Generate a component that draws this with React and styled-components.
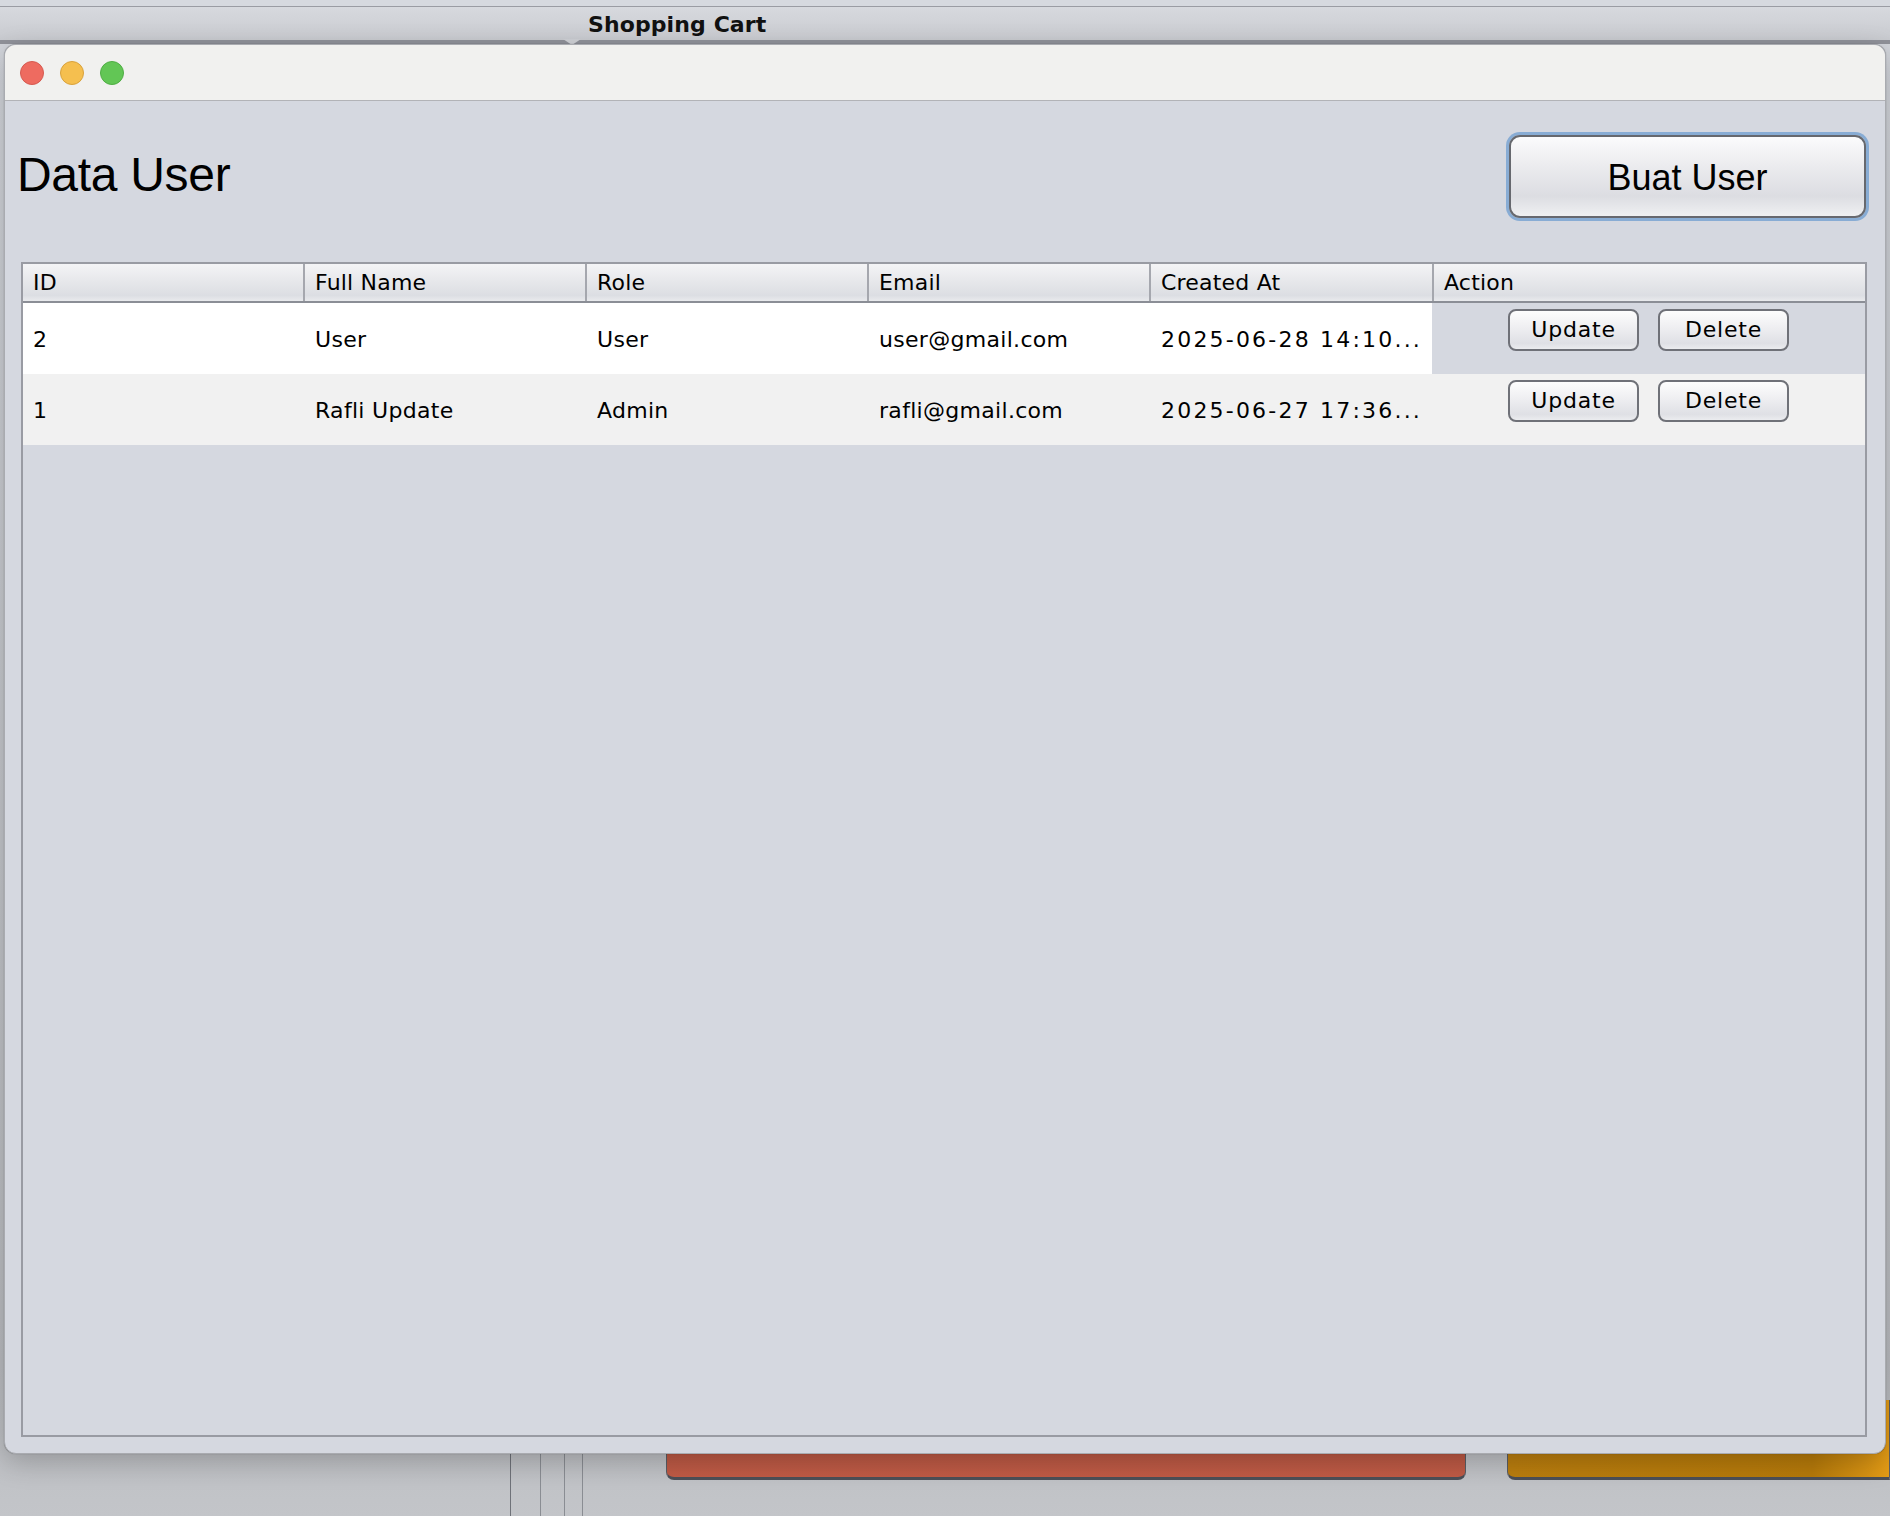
import React from "react";
import styled, { createGlobalStyle } from "styled-components";

const Global = createGlobalStyle`
  html, body { margin: 0; padding: 0; }
  body {
    width: 1890px;
    height: 1516px;
    overflow: hidden;
    font-family: "DejaVu Sans", "Liberation Sans", sans-serif;
  }
`;

const Desktop = styled.div`
  position: relative;
  width: 1890px;
  height: 1516px;
  overflow: hidden;
  background: linear-gradient(180deg, #d3d6dc 0%, #b9bbbf 90%, #c3c5c9 100%);
`;

/* ---------- background application ---------- */
const BackApp = styled.div`
  display: flex;
  flex-direction: column;
  height: 100%;
`;

const BackTop = styled.div`
  height: 6px;
  background: #d6d9df;
  border-bottom: 1px solid #9a9ca3;
`;

const BackTitleBar = styled.div`
  position: relative;
  height: 32px;
  padding-left: 588px;
  padding-top: 1px;
  display: flex;
  align-items: center;
  background: linear-gradient(180deg, #d7d9de, #c9cbd0);
  border-bottom: 4px solid #90929a;
  font-family: "DejaVu Sans", sans-serif;
  font-weight: bold;
  font-size: 22px;
  color: #111;
  letter-spacing: 0.1px;
  &::after {
    content: "";
    position: absolute;
    left: 563px;
    bottom: -5px;
    width: 0;
    height: 0;
    border-left: 9px solid transparent;
    border-right: 9px solid transparent;
    border-top: 6px solid #cfd1d6;
  }
`;

const BackBody = styled.div`
  flex: 1;
  display: flex;
`;

const Pane = styled.div`
  width: ${(p) => p.$w}px;
  flex-shrink: 0;
  border-right: 1px solid ${(p) => p.$line || "#7c7f86"};
`;

const MainPane = styled.div`
  flex: 1;
  display: flex;
  flex-direction: column;
  justify-content: flex-end;
  padding: 0 0 36px 83px;
`;

const BackButtons = styled.div`
  display: flex;
  gap: 41px;
  height: 80px;
`;

const BackButton = styled.div`
  width: ${(p) => (p.$w ? `${p.$w}px` : "auto")};
  flex: ${(p) => (p.$w ? "0 0 auto" : "1")};
  border-radius: ${(p) => (p.$w ? "0 0 8px 8px" : "0 0 0 8px")};
  border: 1px solid #5a5d64;
  border-top: none;
  border-bottom: 3px solid #4c4f57;
  background: ${(p) => p.$bg};
`;

/* ---------- foreground window ---------- */
const Window = styled.div`
  position: absolute;
  left: 4px;
  top: 44px;
  width: 1882px;
  height: 1410px;
  box-sizing: border-box;
  display: flex;
  flex-direction: column;
  border-radius: 12px;
  border: 1px solid #a9abb0;
  background: #d5d8e0;
  overflow: hidden;
  box-shadow: 0 8px 28px rgba(0, 0, 0, 0.22), 0 0 1px rgba(0,0,0,0.4);
`;

const TitleBar = styled.div`
  height: 55px;
  flex-shrink: 0;
  display: flex;
  align-items: center;
  gap: 16px;
  padding-left: 15px;
  background: #f1f1ef;
  border-bottom: 1px solid #b2b3b7;
`;

const Light = styled.span`
  width: 24px;
  height: 24px;
  border-radius: 50%;
  box-sizing: border-box;
  background: ${(p) => p.$bg};
  border: 1px solid ${(p) => p.$bd};
`;

const Content = styled.div`
  flex: 1;
  display: flex;
  flex-direction: column;
  padding: 33px 18px 16px 12px;
  min-height: 0;
`;

const HeaderRow = styled.div`
  display: flex;
  align-items: center;
  justify-content: space-between;
  height: 84px;
  margin-bottom: 44px;
`;

const Heading = styled.h1`
  margin: 0 0 4px 0;
  font-family: "Liberation Sans", Arial, sans-serif;
  font-weight: normal;
  font-size: 48px;
  letter-spacing: -0.3px;
  color: #000;
`;

const PrimaryButton = styled.button`
  width: 357px;
  height: 83px;
  margin-right: 1px;
  box-sizing: border-box;
  border-radius: 11px;
  border: 2px solid #66686e;
  box-shadow: 0 0 0 3px #88acd4;
  background: linear-gradient(180deg, #fbfbfc 0%, #ececef 35%, #dcdde2 75%, #eff0f2 100%);
  font-family: "Liberation Sans", Arial, sans-serif;
  font-size: 36px;
  color: #000;
  padding: 4px 0 0;
`;

const Table = styled.div`
  flex: 1;
  margin-left: 4px;
  display: flex;
  flex-direction: column;
  border: 2px solid #999ba3;
  min-height: 0;
`;

const COLS = "280px 282px 282px 282px 283px 1fr";

const HeadRow = styled.div`
  display: grid;
  grid-template-columns: ${COLS};
  height: 37px;
  border-bottom: 2px solid #8b8e96;
  background: linear-gradient(180deg, #f4f4f6 0%, #e7e8eb 45%, #dcdee3 85%, #e9eaed 100%);
`;

const HeadCell = styled.div`
  display: flex;
  align-items: center;
  padding-left: 10px;
  border-left: ${(p) => (p.$first ? "none" : "2px solid #a5a7ae")};
  font-size: 22px;
  letter-spacing: 0.2px;
  color: #000;
  white-space: nowrap;
`;

const Row = styled.div`
  display: grid;
  grid-template-columns: ${COLS};
  height: 71px;
  background: ${(p) => (p.$alt ? "#f1f1f1" : "transparent")};
`;

const Cell = styled.div`
  display: flex;
  align-items: center;
  padding-left: ${(p) => (p.$first ? "10px" : "12px")};
  padding-top: 2px;
  background: ${(p) => (p.$white ? "#ffffff" : "transparent")};
  font-size: 22px;
  letter-spacing: ${(p) => (p.$mono ? "2.2px" : "0.3px")};
  color: #000;
  white-space: nowrap;
  overflow: hidden;
`;

const ActionCell = styled.div`
  display: flex;
  justify-content: center;
  align-items: flex-start;
  gap: 19px;
  padding-top: 6px;
`;

const SmallButton = styled.button`
  width: 131px;
  height: 42px;
  box-sizing: border-box;
  border-radius: 8px;
  border: 2px solid #6f7178;
  background: linear-gradient(180deg, #fdfdfd 0%, #eeeef1 45%, #dfe0e5 85%, #ebecef 100%);
  font-family: "DejaVu Sans", sans-serif;
  font-size: 22px;
  letter-spacing: 0.8px;
  color: #000;
  padding: 0 0 2px;
`;

const users = [
  { id: "2", name: "User", role: "User", email: "user@gmail.com", created: "2025-06-28 14:10..." },
  { id: "1", name: "Rafli Update", role: "Admin", email: "rafli@gmail.com", created: "2025-06-27 17:36..." },
];

const headers = ["ID", "Full Name", "Role", "Email", "Created At", "Action"];

export default function App() {
  return (
    <>
      <Global />
      <Desktop>
        <BackApp>
          <BackTop />
          <BackTitleBar>Shopping Cart</BackTitleBar>
          <BackBody>
            <Pane $w={510} $line="#6f7279" />
            <Pane $w={29} $line="#8a8d93" />
            <Pane $w={23} $line="#8a8d93" />
            <Pane $w={17} $line="#8a8d93" />
            <MainPane>
              <BackButtons>
                <BackButton $w={798} $bg="linear-gradient(180deg, #b4533f, #c05b46)" />
                <BackButton $bg="linear-gradient(90deg, #bb7e0e, #b67a0a 80%, #e49c16)" />
              </BackButtons>
            </MainPane>
          </BackBody>
        </BackApp>

        <Window>
          <TitleBar>
            <Light $bg="#ee6b60" $bd="#d65a50" />
            <Light $bg="#f5bf4f" $bd="#d9a23c" />
            <Light $bg="#62c655" $bd="#4fae44" />
          </TitleBar>
          <Content>
            <HeaderRow>
              <Heading>Data User</Heading>
              <PrimaryButton>Buat User</PrimaryButton>
            </HeaderRow>
            <Table>
              <HeadRow>
                {headers.map((h, i) => (
                  <HeadCell key={h} $first={i === 0}>
                    {h}
                  </HeadCell>
                ))}
              </HeadRow>
              {users.map((u, i) => {
                const white = i === 0;
                return (
                  <Row key={u.id} $alt={i === 1}>
                    <Cell $first $white={white}>{u.id}</Cell>
                    <Cell $white={white}>{u.name}</Cell>
                    <Cell $white={white}>{u.role}</Cell>
                    <Cell $white={white}>{u.email}</Cell>
                    <Cell $white={white} $mono>{u.created}</Cell>
                    <ActionCell>
                      <SmallButton>Update</SmallButton>
                      <SmallButton>Delete</SmallButton>
                    </ActionCell>
                  </Row>
                );
              })}
            </Table>
          </Content>
        </Window>
      </Desktop>
    </>
  );
}
